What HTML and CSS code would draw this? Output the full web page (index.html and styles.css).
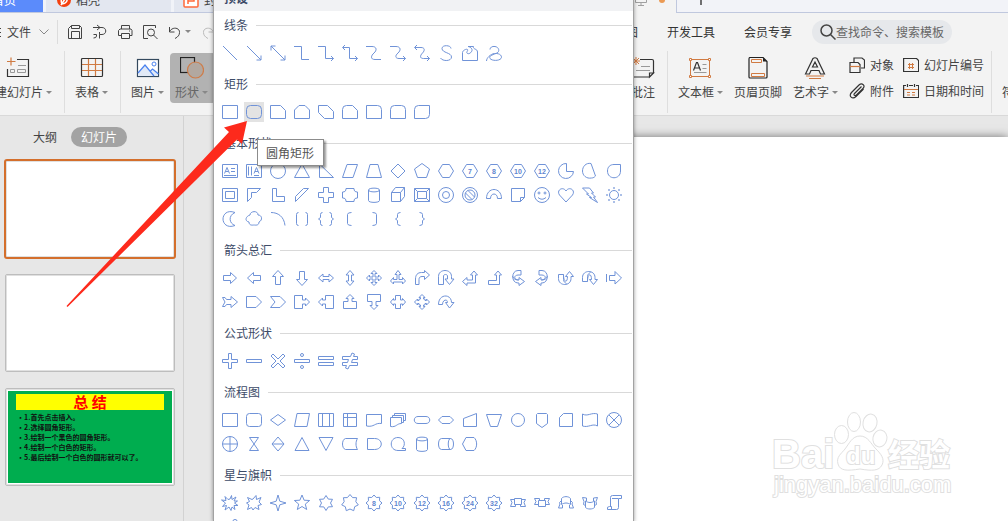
FILE: index.html
```
<!DOCTYPE html>
<html lang="zh-CN">
<head>
    <meta charset="UTF-8">
    <meta name="viewport" content="width=device-width, initial-scale=1.0">
    <title>WPS 演示</title>
    <link rel="stylesheet" href="styles.css">
</head>
<body>
    <div class="app">
        <div class="tab-strip">
            <button class="tab tab-home">首页</button>
            <button class="tab tab-docer">
                <svg width="14" height="18" viewBox="0 0 14 18"><circle cx="7" cy="10" r="7" fill="#f4400f"/><path d="M5 14c-2-4 0-7 5-8 1 5-1 8-5 8zM4 15l4-6" fill="none" stroke="#fff" stroke-width="1.5"/></svg>
                稻壳
            </button>
            <button class="tab tab-file">
                <svg width="16" height="18" viewBox="0 0 16 18"><rect x="1" y="2" width="14" height="15" rx="1" fill="#fff" stroke="#ff6a3a" stroke-width="1.5"/><path d="M5 14V6h6v5H5" fill="none" stroke="#ff6a3a" stroke-width="1.5"/></svg>
                封
            </button>
            <div class="tab tab-active">
                <svg width="12" height="12" viewBox="0 0 12 12" fill="none" stroke="#a0a0a0"><path d="M.5 1v7.500h11V1M6 8.500v3M3 11.500h6"/></svg>
                <span class="unsaved"></span>
            </div>
            <button class="new-tab" aria-label="新建标签">
                <svg width="12" height="12" viewBox="0 0 12 12"><path d="M6 0v12M0 6h12" stroke="#444" stroke-width="1.5"/></svg>
            </button>
        </div>

        <div class="menubar">
            <div class="quick">
                <button class="file-menu">
                    <svg width="10" height="12" viewBox="0 0 10 12" stroke="#444"><path d="M0 2.500h10M0 6.500h10M0 10.500h10"/></svg>
                    文件
                    <svg class="chevron" width="10" height="6" viewBox="0 0 10 6" fill="none" stroke="#888"><path d="M.5.5L5 5 9.500.5"/></svg>
                </button>
                <span class="quick-line"></span>
                <button class="quick-btn" aria-label="保存">
                    <svg width="16" height="16" viewBox="0 0 16 16"><path d="M1.500 14.500v-10l3-3h8l2 2v11zM4.500 1.500v3h8v-3M4.500 14.500v-7h8v7"/></svg>
                </button>
                <button class="quick-btn" aria-label="输出">
                    <svg width="16" height="16" viewBox="0 0 16 16"><path d="M1 3.500h9c5 0 5 7 0 7H7.500v4M5 1l3 2.500L5 6M7.500 10.500V8M1.500 10.500h3v1.500q0 2-3 2"/></svg>
                </button>
                <button class="quick-btn" aria-label="打印">
                    <svg width="16" height="16" viewBox="0 0 16 16"><path d="M4.500 5V1.500h8V5M4 11.500H1.500v-5l1.500-1.500h11l1 1.500v5h-2.500M4.500 9.500h8v5h-8zM12 7h1"/></svg>
                </button>
                <button class="quick-btn" aria-label="打印预览">
                    <svg width="16" height="16" viewBox="0 0 16 16"><path d="M6 14.500H1.500v-13h12V4M5.500 8.500a3.500 3.500 0 1 0 7 0a3.500 3.500 0 1 0-7 0M11.500 11l4 4"/></svg>
                </button>
                <button class="quick-btn undo" aria-label="撤销">
                    <svg width="16" height="16" viewBox="0 0 16 16"><path d="M2.500 3v5h5M2.500 7.500C6 2 13 4 12.500 8.500 12.500 11 11 13 8 14.500"/></svg>
                    <span class="caret"></span>
                </button>
                <button class="quick-btn redo" aria-label="恢复">
                    <svg width="16" height="16" viewBox="0 0 16 16"><path d="M13.500 3v5h-5M13.500 7.500C10 2 3 4 3.500 8.500c0 2.500 1.500 4.500 4.500 6"/></svg>
                </button>
            </div>
            <nav class="menus">
                <a href="#">视图</a>
                <a href="#">开发工具</a>
                <a href="#">会员专享</a>
            </nav>
            <label class="search">
                <svg width="16" height="16" viewBox="0 0 16 16" fill="none" stroke="#444" stroke-width="1.500"><circle cx="6.500" cy="6.500" r="5.500"/><path d="M10.500 10.500l5 5"/></svg>
                <input type="text" placeholder="查找命令、搜索模板" aria-label="查找命令、搜索模板">
            </label>
        </div>

        <div class="ribbon">
            <div class="ribbon-group ribbon-left">
                <button class="tool">
                    <svg width="24" height="22" viewBox="0 0 24 22" fill="none"><path d="M11 2.500h11.500v17h-21V12" stroke="#333" stroke-width="1.200"/><path d="M5 .5v8M1 4.500h8.500" stroke="#d07a42" stroke-width="1.200"/><path d="M12 8.500h8M4.500 12.500h4v3h-4zM11.500 12.500h8v3h-8z" stroke="#999"/></svg>
                    <span class="tool-name">新建幻灯片<i class="caret"></i></span>
                </button>
                <span class="line"></span>
                <button class="tool">
                    <svg width="24" height="22" viewBox="0 0 24 22" fill="none"><path d="M1.500 7.500h21M1.500 13.500h21M8.500 1.500v18M15.500 1.500v18" stroke="#d07a42" stroke-width="1.200"/><rect x="1.500" y="1.500" width="21" height="18" rx="1" stroke="#333" stroke-width="1.200"/></svg>
                    <span class="tool-name">表格<i class="caret"></i></span>
                </button>
                <span class="line"></span>
                <button class="tool">
                    <svg width="24" height="22" viewBox="0 0 24 22" fill="none"><rect x="1.500" y="2.500" width="21" height="17" fill="#fff" stroke="#34495e" stroke-width="1.200"/><path d="M2 16l7-7 6 6 3-3 4 4v3H2z" fill="#e1e9f6"/><path d="M2 16l7-8 9 11M14 14.500l2.500-2.500 6 5" stroke="#4a82ee" stroke-width="1.200"/><circle cx="18" cy="7" r="2" stroke="#4a82ee"/></svg>
                    <span class="tool-name">图片<i class="caret"></i></span>
                </button>
                <button class="tool tool-open">
                    <svg width="24" height="22" viewBox="0 0 24 22" fill="none"><rect x=".5" y=".5" width="14" height="15" stroke="#222" stroke-width="1.200"/><circle cx="15.500" cy="13" r="8" fill="#b2a8a0" stroke="#cf7c48" stroke-width="1.200"/></svg>
                    <span class="tool-name">形状<i class="caret"></i></span>
                </button>
            </div>

            <div class="ribbon-group">
                <button class="tool">
                    <svg width="24" height="22" viewBox="0 0 24 22" fill="none"><path d="M9 2.500h12q1.500 0 1.500 1.500v12l-4 4h-17V9M18.500 20v-4h4z" stroke="#333" stroke-width="1.200"/><path d="M10 9.500h9M5 13.500h14" stroke="#999"/><path d="M5 0v8M1 4h8M2 1l6 6M8 1L2 7" stroke="#d07a42"/></svg>
                    <span class="tool-name">批注</span>
                </button>
                <span class="line"></span>
                <button class="tool">
                    <svg width="24" height="22" viewBox="0 0 24 22" fill="none"><path d="M3 2.500h18M3 19.500h18M2.500 3v16M21.500 3v16" stroke="#d07a42"/><path d="M1.500 1.500h2v2h-2zM20.500 1.500h2v2h-2zM1.500 18.500h2v2h-2zM20.500 18.500h2v2h-2z" fill="#fff" stroke="#d07a42"/><path d="M5.500 13.500l3-8h1l3 8M6.500 11h5" stroke="#333" stroke-width="1.200"/><path d="M14.500 7.500h4M14.500 11.500h4M6 15.500h12.500" stroke="#999"/></svg>
                    <span class="tool-name">文本框<i class="caret"></i></span>
                </button>
                <button class="tool">
                    <svg width="24" height="22" viewBox="0 0 24 22" fill="none"><path d="M4 .5h13l4 4V20q0 1-1 1H4q-1 0-1-1V2q0-1.500 1-1.500z" stroke="#222" stroke-width="1.200"/><path d="M17 .5v4h4z" fill="#222"/><path d="M5.500 2.500h10v3h-10zM5.500 16.500h13v3h-13z" stroke="#d07a42"/></svg>
                    <span class="tool-name">页眉页脚</span>
                </button>
                <button class="tool">
                    <svg width="24" height="22" viewBox="0 0 24 22" fill="none"><path d="M2.500 17L10 1.500Q12 0 14 1.500L21.500 17h-4L16 13.500H8L6.500 17zM9.500 10h5L12 5z" stroke="#333" stroke-width="1.200"/><path d="M3 19h18M6 21.500h12" stroke="#d07a42" stroke-width="1.200"/></svg>
                    <span class="tool-name">艺术字<i class="caret"></i></span>
                </button>
                <div class="small-tools">
                    <button class="small-tool">
                        <svg width="16" height="16" viewBox="0 0 16 16" fill="none" stroke="#333" stroke-width="1.200"><path d="M5 5V1h8l2.500 2v8H12"/><path d="M1 5.500h8l2 2V15.500H1z"/><path d="M1 9.500h10" stroke="#d07a42"/></svg>
                        对象
                    </button>
                    <button class="small-tool">
                        <svg width="16" height="16" viewBox="0 0 16 16" fill="none" stroke="#333" stroke-width="1.200"><path d="M12.500 3.500l-7 7c-1.500 1.500.5 3 2 1.500l6.500-6.500c3-3-1-6-4-3.500l-7.500 7.500c-3.500 4 1 7 4.500 4l7.500-7.500"/></svg>
                        附件
                    </button>
                    <button class="small-tool">
                        <svg width="16" height="16" viewBox="0 0 16 16" fill="none" stroke="#333" stroke-width="1.200"><path d="M.6 1.500h13l2 2v11h-15z"/><path d="M6.500 6v6M9.500 6v6M5 7.500h6M5 10.500h6" stroke="#d07a42" stroke-width="1"/></svg>
                        幻灯片编号
                    </button>
                    <button class="small-tool">
                        <svg width="16" height="16" viewBox="0 0 16 16" fill="none" stroke="#333" stroke-width="1.200"><path d="M3 2.500H.6v12h15v-12H13M6 2.500h4M4.500 1v3M11.500 1v3"/><path d="M1 6.500h14M4 9.500h3M9 9.500h3M4 12h3M9 12h3" stroke="#d07a42" stroke-width="1"/></svg>
                        日期和时间
                    </button>
                </div>
                <span class="line"></span>
                <button class="tool tool-cut"><span class="tool-name">符号</span></button>
            </div>
        </div>

        <div class="workspace">
            <aside class="sidebar">
                <div class="view-switch">
                    <button class="view">大纲</button>
                    <button class="view view-on">幻灯片</button>
                </div>
                <div class="thumbs">
                    <div class="thumb thumb-selected"></div>
                    <div class="thumb"></div>
                    <div class="thumb">
                        <div class="summary">
                            <h3>总 结</h3>
                            <ul>
                                <li>1.首先点击插入。</li>
                                <li>2.选择圆角矩形。</li>
                                <li>3.绘制一个黑色的圆角矩形。</li>
                                <li>4.绘制一个白色的矩形。</li>
                                <li>5.最后绘制一个白色的圆形就可以了。</li>
                            </ul>
                        </div>
                    </div>
                </div>
            </aside>
            <main class="canvas">
                <div class="slide"></div>
            </main>
        </div>

        <div class="shape-menu">
            <div class="menu-head">预设</div>
            <div id="shape-groups"></div>
        </div>

        <div class="tooltip" role="tooltip">圆角矩形</div>

        <svg class="pointer" width="182" height="188" viewBox="0 0 182 188">
            <path d="M.5 187L163 13l-5-4.500L181 2l-5 23-5-4.500L1.500 188z" fill="#fd2a1c"/>
        </svg>

        <svg class="watermark" width="186" height="92" viewBox="0 0 186 92">
            <text x="2" y="60" class="wm-bold" font-size="40">Bai</text>
            <g class="wm-paw">
                <ellipse cx="71.500" cy="26.500" rx="7" ry="9"/>
                <ellipse cx="84" cy="14" rx="6.500" ry="9.500"/>
                <ellipse cx="100" cy="15" rx="7" ry="9" transform="rotate(12 100 15)"/>
                <ellipse cx="110" cy="30.500" rx="7" ry="8.500" transform="rotate(12 110 30)"/>
                <path d="M90 28c8 0 11 8 16 13s9 10 6 16-10 6-22 4c-13 2-20 2-22-5s3-10 7-15 7-13 15-13z"/>
            </g>
            <text x="76" y="56" class="wm-bold" font-size="24">du</text>
            <text x="118" y="58" class="wm-bold wm-cjk" font-size="31">经验</text>
            <text x="4" y="84" class="wm-thin" font-size="22">jingyan.baidu.com</text>
        </svg>
    </div>
    <script src="shapes.js"></script>
</body>
</html>
```

FILE: styles.css
```
* {
    box-sizing: border-box;
}
body, html {
    height: 100%;
    margin: 0;
    padding: 0;
    overflow: hidden;
}
body, button, input {
    font-family: 'Noto Sans CJK SC', sans-serif;
    font-size: 12px;
    line-height: 16px;
    color: #444;
}
button {
    border: none;
    background: none;
    padding: 0;
    white-space: nowrap;
    cursor: pointer;
}
.app {
    position: relative;
    display: flex;
    flex-direction: column;
    height: 100vh;
    overflow: hidden;
    background: #e7e7e7;
}

/* tabs */
.tab-strip {
    display: flex;
    gap: 3px;
    height: 13px;
    padding-bottom: 1px;
    background: #f1f3f8;
    box-shadow: inset 0 -1px #c0c8de;
    flex-shrink: 0;
}
.tab {
    display: flex;
    align-items: flex-end;
    gap: 5px;
    padding: 0 11px 4px;
    background: #e3e7f0;
    overflow: hidden;
}
.tab-home {
    width: 43px;
    padding-left: 0;
    padding-right: 35px;
    justify-content: center;
    background: #5b8bfb;
    color: #fff;
}
.tab-docer {
    width: 125px;
}
.tab-file {
    width: 120px;
    padding-left: 9px;
}
.tab-active {
    flex: 1;
    height: 13px;
    justify-content: flex-end;
    gap: 12px;
    padding-bottom: 7px;
    background: #f3f3f3;
}
.unsaved {
    width: 6px;
    height: 6px;
    margin-bottom: 3px;
    border-radius: 50%;
    background: #eb9a53;
}
.new-tab {
    width: 332px;
    margin-left: -3px;
    padding-left: 18px;
    display: flex;
    align-items: flex-end;
    padding-bottom: 7px;
    background: #f2f3f8;
    border-left: 1px solid #c0c8de;
}

/* menu bar */
.menubar {
    display: flex;
    align-items: center;
    height: 37px;
    flex-shrink: 0;
    padding-right: 56px;
    background: #f3f3f3;
}
.quick {
    display: flex;
    align-items: center;
    margin-right: auto;
    margin-left: -9px;
}
.file-menu {
    display: flex;
    align-items: center;
    gap: 6px;
}
.chevron {
    margin-left: 2px;
}
.quick-line {
    width: 1px;
    height: 24px;
    margin: 0 9px 0 8px;
    background: #dcdcdc;
}
.quick-btn {
    display: flex;
    align-items: center;
    gap: 2px;
    margin-right: 9px;
}
.quick-btn svg {
    fill: none;
    stroke: #444;
}
.redo svg {
    stroke: #bbb;
}
.caret {
    display: inline-block;
    border: 3px solid transparent;
    border-top-color: #888;
    border-bottom: 0;
}
.menus {
    display: flex;
    gap: 29px;
    margin-right: 20px;
}
.menus a {
    color: #333;
    text-decoration: none;
}
.search {
    display: flex;
    align-items: center;
    width: 140px;
    height: 24px;
    padding: 0 4px 0 8px;
    border-radius: 12px;
    background: #e6e8eb;
}
.search svg {
    flex-shrink: 0;
}
.search input {
    flex: 1;
    min-width: 0;
    padding: 0;
    border: none;
    outline: none;
    background: none;
}
.search input::placeholder {
    color: #666;
}

/* ribbon */
.ribbon {
    display: flex;
    justify-content: space-between;
    height: 66px;
    padding-top: 1px;
    flex-shrink: 0;
    background: #f3f3f3;
    border-bottom: 1px solid #d9d9d9;
}
.ribbon-group {
    display: flex;
    align-items: flex-start;
}
.ribbon-left {
    margin-left: -22px;
}
.tool {
    display: flex;
    flex-direction: column;
    align-items: center;
    gap: 4px;
    height: 50px;
    margin-top: 2px;
    padding: 4px 5px 2px;
    border-radius: 4px;
}
.tool + .tool {
    margin-left: 1px;
}
.tool-name {
    display: flex;
    align-items: center;
    gap: 3px;
    line-height: 18px;
}
.tool-open {
    padding-right: 8px;
    background: #b2b2b2;
}
.tool-open .tool-name {
    color: #666;
}
.tool-cut {
    width: 11px;
    align-items: flex-start;
    justify-content: flex-end;
    overflow: hidden;
    border-radius: 0;
}
.line {
    width: 1px;
    height: 62px;
    margin: 0 5px 0 7px;
    background: #dedede;
}
.small-tools {
    display: grid;
    grid-template-rows: 26px 26px;
    grid-auto-flow: column;
    column-gap: 9px;
    margin: 1px 0 0 6px;
}
.small-tool {
    display: flex;
    align-items: center;
    gap: 5px;
}

/* workspace */
.workspace {
    display: flex;
    flex: 1;
    min-height: 0;
}
.sidebar {
    width: 184px;
    flex-shrink: 0;
    border-right: 1px solid #d2d2d2;
}
.view-switch {
    display: flex;
    align-items: center;
    gap: 14px;
    padding: 11px 0 13px 33px;
}
.view-on {
    height: 20px;
    padding: 0 10px;
    border-radius: 10px;
    background: #a3a3a3;
    color: #fff;
}
.thumbs {
    display: flex;
    flex-direction: column;
    gap: 16px;
    padding-left: 5px;
}
.thumb {
    width: 170px;
    height: 98px;
    border: 1px solid #bdbdbd;
    border-radius: 2px;
    padding: 2px;
    background: #fff;
    box-shadow: inset 0 0 0 1px #e0e0e0;
}
.thumb-selected {
    border-color: #cccccc;
    outline: 2px solid #d46f2c;
    outline-offset: -1px;
}
.summary {
    height: 92px;
    padding: 3px 8px;
    background: #00ad4f;
    color: #111;
}
.summary h3 {
    margin: 0 0 2px;
    background: #ff0;
    color: #f00;
    font-size: 15px;
    line-height: 16px;
    text-align: center;
}
.summary ul {
    margin: 0;
    padding-left: 6px;
    font-size: 7px;
    font-weight: bold;
    line-height: 10px;
    white-space: nowrap;
    list-style: none;
}
.summary li::before {
    content: '•';
    float: left;
    margin-left: -5px;
}
.canvas {
    flex: 1;
    padding: 21px 0 0 50px;
}
.slide {
    height: 100%;
    background: #fff;
    box-shadow: 0 0 9px rgba(0,0,0,0.5);
}

/* shapes drop-down */
.shape-menu {
    position: absolute;
    top: 0;
    bottom: 0;
    left: 214px;
    width: 419px;
    overflow: hidden;
    background: #fff;
    outline: 1px solid #a2a2a2;
    box-shadow: 0 0 4px 1px rgba(0,0,0,0.4);
}
.menu-head {
    display: flex;
    align-items: flex-end;
    height: 11px;
    padding: 0 10px 5px;
    background: #f1f2f4;
    color: #3d4b68;
    font-weight: bold;
}
.group {
    margin-bottom: 5px;
}
.group-name {
    display: flex;
    align-items: center;
    gap: 8px;
    margin: 0;
    padding: 6px 1px 8px 10px;
    font-size: 12px;
    font-weight: normal;
    line-height: 16px;
    color: #3d4b68;
}
.group-name::after {
    content: '';
    flex: 1;
    height: 1px;
    background: #d9d9d9;
}
.shapes {
    display: flex;
    flex-wrap: wrap;
    padding-left: 4px;
}
.shape {
    width: 24px;
    height: 24px;
    padding: 2px;
    background-clip: content-box;
}
.shape:hover, .shape-hover {
    background-color: #e3e3e3;
}
.shape svg {
    display: block;
    margin: -2px;
    fill: none;
    stroke: #7093d8;
}
.shape text {
    font: bold 7px 'Liberation Sans', sans-serif;
    text-anchor: middle;
    fill: #6085cf;
    stroke: none;
}
.tooltip {
    position: absolute;
    top: 139px;
    left: 257px;
    padding: 5px 9px 4px 8px;
    border: 1px solid #8c8c8c;
    background: #fff;
    color: #555;
    box-shadow: 2px 2px 2px rgba(0,0,0,0.4);
}
.pointer {
    position: absolute;
    top: 119px;
    left: 66px;
    pointer-events: none;
}

/* watermark */
.watermark {
    position: absolute;
    right: 52px;
    bottom: 21px;
    fill: #fff;
    stroke: #e0e0e0;
    pointer-events: none;
}
.wm-bold, .wm-thin {
    font-family: 'Liberation Sans', sans-serif;
    stroke-width: 2px;
    paint-order: stroke;
}
.wm-bold {
    font-weight: bold;
}
.wm-cjk {
    font-family: 'Noto Sans CJK SC', sans-serif;
}
.wm-paw {
    stroke-width: 1px;
}
```

FILE: shapes.js
```
// every outline is drawn in a 24 x 24 cell
function circle(x, y, r) {
    return `M${x - r} ${y}a${r} ${r} 0 1 0 ${2 * r} 0a${r} ${r} 0 1 0 ${-2 * r} 0z`;
}

function star(points, outer, inner) {
    let d = '';
    for (let i = 0; i < points * 2; i++) {
        const r = i % 2 ? inner : outer;
        const a = Math.PI * i / points - Math.PI / 2;
        d += (i ? 'L' : 'M') + (12 + r * Math.cos(a)).toFixed(1) + ' ' + (12 + r * Math.sin(a)).toFixed(1);
    }
    return d + 'z';
}

const hexagon = 'M8.5 5.500h7l4 6.500-4 6.500h-7L4.500 12z';
const seal = star(8, 8, 6);
const rect = 'M4.500 5.500h15v13h-15z';
const roundRect = 'M8.500 5.500h7q4 0 4 4v5q0 4-4 4h-7q-4 0-4-4v-5q0-4 4-4z';
const can = 'M6.500 7v10.500c0 2.500 11 2.500 11 0V7c0-2.500-11-2.500-11 0s11 2.500 11 0';

// a shape is a path, or [path, label] when it carries a number
const groups = [
    ['线条', [
        'M5 5l14 14',
        'M5 5l14 14M19 14.500V19h-4.500',
        'M5 5l14 14M19 14.500V19h-4.500M5 9.500V5h4.500',
        'M4 5.500h7.500v13H19',
        'M4 5.500h7.500v12h8M17 15l2.500 2.500L17 20',
        'M5 6.500h6.500v11h8M17 15l2.500 2.500L17 20M7 4L4.500 6.500 7 9',
        'M4 5.500h6c5 0 5 4 2 6.500s-4 6.500 1 6.500h6',
        'M4 5.500h6c5 0 5 4 2 6.500s-3 5.500 1 5.500h6.500M17 15l2.500 2.500L17 20',
        'M5 6.500h6c4 0 4 3 1.500 5.500s-3 5.500 1 5.500h6M17 15l2.500 2.500L17 20M7 4L4.500 6.500 7 9',
        'M17 7.500C17 4 8 3.500 8 7.500c0 4.500 9.500 4 9.500 8.500 0 4.500-9 4.500-11 1',
        'M4.500 19.500v-8c0-2 4-4 5-3s-2 3 0 4 5-2 4.500-4-3-3-4-3h5.500c-1 3 4 2 4 5.500v8.500z',
        'M4.500 20c0-3 4-7 8-7.500 6-.5 8 3 6.500 5-2 2.500-9 2.500-11 0-1.500-3 4-4 7-5.500s2-6-2-6.500c-3-.5-5 1-5 3'
    ]],
    ['矩形', [
        rect,
        roundRect,
        'M4.500 5.500h10l5 5v8h-15z',
        'M9 5.500h6l4.500 4.500v8.500h-15V10z',
        'M4.500 5.500h9l6 6v7h-9l-6-6z',
        'M8.500 5.500h6l5 5v8h-15v-9q0-4 4-4z',
        'M4.500 5.500h11q4 0 4 4v9h-15z',
        'M8.500 5.500h7q4 0 4 4v9h-15v-9q0-4 4-4z',
        'M8.500 5.500h11v9q0 4-4 4h-11v-9q0-4 4-4z'
    ]],
    ['基本形状', [
        rect + 'M6.500 14.500l2.500-6 2.500 6M7.500 12.500h3M13 9.500h4M13 12.500h4M6 16.500h12',
        rect + 'M6.500 7.500v9M9.500 7.500v9M12 14.500l2.500-6 2.500 6M13 12.500h3M12 16.500h5',
        circle(12, 12, 7.5),
        'M12 5l7.500 13.500h-15z',
        'M5.500 5v13.500h14z',
        'M9 5.500h10.500l-4.500 13H4.500z',
        'M8 5.500h8l3.500 13h-15z',
        'M12 5l7 7-7 7-7-7z',
        'M12 4.500l7.500 5.500-3 8.500h-9L4.500 10z',
        hexagon,
        [hexagon, '7'],
        [hexagon, '8'],
        [hexagon, '10'],
        [hexagon, '12'],
        'M12.500 4.500a7.500 7.500 0 1 0 7 8h-7z',
        'M13 4.500c-5-1-8.500 3-8.500 7.500s4 8 9 7c2 0 3-1 4-2z',
        'M12 5.500h6.500V12c0 9-13 9-13 0 0-4 2.500-6.500 6.500-6.500z',
        rect + 'M7.500 8.500h9v7h-9z',
        'M5.500 5.500h13l-4 4h-5v5l-4 4z',
        'M6.500 5.500h4v8h8v5h-12z',
        'M5.500 18.500v-5l8-8h5z',
        'M9.500 4.500h5v5h5v5h-5v5h-5v-5h-5v-5h5z',
        'M8 5.500h8c0 2.500 1 3.500 3.500 3.500v6c-2.500 0-3.500 1-3.500 3.500H8c0-2.500-1-3.500-3.500-3.500V9C7 9 8 8 8 5.500z',
        can,
        'M5.500 9.500h9v9h-9zM5.500 9.500l4-5h9v9l-4 5M14.500 9.500l4-5',
        rect + 'M7.500 8.500h9v7h-9zM4.500 5.500l3 3M19.500 5.500l-3 3M4.500 18.500l3-3M19.500 18.500l-3-3',
        circle(12, 12, 7.5) + circle(12, 12, 3.5),
        circle(12, 12, 7.5) + circle(12, 12, 5) + 'M7.500 10l6.500 6.500M10 7.500l6.500 6.500',
        'M4.500 15.500c0-12 15-12 15 0h-4c0-6-7-6-7 0z',
        'M5.500 5.500h13v9l-4 4h-9zM14.500 18.500v-4h4',
        circle(12, 12, 7.5) + circle(9, 10, 1) + circle(15, 10, 1) + 'M8 14.500q4 3.500 8 0',
        'M12 19L5.500 12C2 7 9 3 12 8c3-5 10-1 6.500 4z',
        'M4.500 5h7l4 5h-2l4 4h-2l4 5.500-8-5h2l-5-3.500h2z',
        circle(12, 12, 4.5) + circle(12, 5, .5) + circle(12, 19, .5) + circle(5, 12, .5) + circle(19, 12, .5)
            + circle(7, 7, .5) + circle(17, 7, .5) + circle(7, 17, .5) + circle(17, 17, .5),
        'M17 5.500c-8-3-12 2-12 6.500s4 9.500 12 6.500c-6-2-7-10 0-13z',
        'M8 8c0-4 8-5 8 0 4 0 5 5 1 7 0 4-4 3-5 3s-5 1-5-3c-5-1-3-6 1-7z',
        'M5 5.500c7 0 13 4 14 13',
        'M8.500 5.500q-2 0-2 2v9q0 2 2 2M15.500 5.500q2 0 2 2v9q0 2-2 2',
        'M8.500 5.500q-2 0-2 2v3l-2 1.500 2 1.500v3q0 2 2 2M15.500 5.500q2 0 2 2v3l2 1.500-2 1.500v3q0 2-2 2',
        'M13.500 5.500q-4 0-4 2v9q0 2 4 2',
        'M10.500 5.500q4 0 4 2v9q0 2-4 2',
        'M14.500 5.500q-3 0-3 2v3L9.500 12l2 1.500v3q0 2 3 2',
        'M9.500 5.500q3 0 3 2v3l2 1.500-2 1.500v3q0 2-3 2'
    ]],
    ['箭头总汇', [
        'M5.500 9.500h7v-3l6 5.500-6 5.500v-3h-7z',
        'M18.500 9.500h-7v-3L5.500 12l6 5.500v-3h7z',
        'M9.500 18.500v-8h-3L12 4.500l5.500 6h-3v8z',
        'M9.500 5.500v8h-3L12 19.500l5.500-6h-3v-8z',
        'M4.500 12L9 8v2.500h6V8l4.500 4-4.500 4v-2.500H9V16z',
        'M12 4.500L16 9h-2.500v6H16l-4 4.500L8 15h2.500V9H8z',
        'M12 4.500l3 3h-2v3.500h3.500V9l3 3-3 3v-2H13v3.500h2l-3 3-3-3h2V13H7.500v2l-3-3 3-3v2H11V7.500H9z',
        'M12 4.500l3 4h-2v5h3.500v-2l3 3.500-3 3v-2h-9v2l-3-3 3-3.500v2H11v-5H9z',
        'M5.500 18.500V13c0-4 2-6.500 6-6.500h3v-2l5 4.500-5 4.500v-3h-2.500c-2 0-3 1-3 3v5z',
        'M4.500 18.500v-8c0-8 13-8 13 0V13h2.500l-4.500 5.500-4.500-5.500h2.500v-3c0-2-4-2-4 0v8.500z',
        'M16 5l3.500 4h-2v8H9v2.500l-4.500-4L9 11.500V14h5.500V9h-2z',
        'M16 5l3.500 4h-2v9.500h-11v-4h8V9h-2z',
        'M15 4.500h-3C5 4.500 5 17 12 17h1v2.500l5.500-4-5.500-4V14c-5 0-6-4.500-1-5h3zM6.500 10c1 3 3 4 6 4',
        'M9 4.500h3C19 4.500 19 17 12 17h-1v2.500l-5.500-4 5.500-4V14c5 0 6-4.500 1-5H9zM17.500 10c-1 3-3 4-6 4',
        'M4.500 8.500v4c0 8 12.500 8 12.500 0v-2h2.500l-4-5-4 5h2c0 7-4 6-4-2h-5zM9.500 8.500v5c0 2 1 3 3 4',
        'M4.500 15.500v-4c0-8 12.500-8 12.500 0v2h2.500l-4 5-4-5h2c0-7-4-6-4 2h-5zM9.500 15.500v-5c0-2 1-3 3-4',
        'M4.500 8v8M7.500 9.500H13v-4l6.500 6.500-6.500 6v-3.500H7.500z',
        'M4.500 7.500H7l1.500 2H13v-3l6.500 5.500-6.500 5.500v-3H8.500l-1.500 2H4.500L7 12z',
        'M4.500 6.500H14l5.500 5.500-5.500 5.500H4.500z',
        'M4.500 6.500H14l5.500 5.500-5.500 5.500H4.500L9 12z',
        'M4.500 5.500h8V10h3V8l4 4-4 4v-2h-3v4.500h-8z',
        'M19.500 5.500h-8V10h-3V8l-4 4 4 4v-2h3v4.500h8z',
        'M5.500 18.500v-7H10v-3H8l4-4 4 4h-2v3h4.500v7z',
        'M5.500 4.500v7H10v4H8l4 4 4-4h-2v-4h4.500v-7z',
        'M9.500 5.500h5V10h2V8.500l3 3.500-3 3.500V14h-2v4.500h-5V14h-2v1.500l-3-3.500 3-3.500V10h2z',
        'M12 4.500l3 3h-1.500V9H15v1.500h1.500V9l3 3-3 3v-1.500H15V15h-1.500v1.500H15l-3 3-3-3h1.500V15H9v-1.500H7.500V15l-3-3 3-3v1.500H9V9h1.500V7.500H9z',
        'M4.500 14.500c0-11 13-11 13-2H20l-4.500 5.500-4-5.500h2c0-4-5-3-5 2z'
    ]],
    ['公式形状', [
        'M10.500 4.500h3v6h6v3h-6v6h-3v-6h-6v-3h6z',
        'M4.500 10.500h15v3h-15z',
        'M7 5l5 5 5-5 2 2-5 5 5 5-2 2-5-5-5 5-2-2 5-5-5-5z',
        'M4.500 10.500h15v3h-15z' + circle(12, 6, 1.5) + circle(12, 18, 1.5),
        'M4.500 7.500h15v3h-15zM4.500 13.500h15v3h-15z',
        'M4.500 7.500h8L14 4l2.500 1-1 2.500h4v3h-5l-1 3h6v3h-8L10 20l-2.500-1 1-2.500h-4v-3h5l1-3h-6z'
    ]],
    ['流程图', [
        rect,
        'M7.500 5.500h9q3 0 3 3v7q0 3-3 3h-9q-3 0-3-3v-7q0-3 3-3z',
        'M12 6.500l7.500 5.500-7.500 5.500L4.500 12z',
        'M7 5.500h12.500l-2.500 13H4.500z',
        rect + 'M8.500 5.500v13M15.500 5.500v13',
        'M5.500 5.500h13v13h-13zM9.500 5.500v13M5.500 9.500h13',
        'M4.500 6.500h15v9c-7-1-7 4-15 2.500z',
        'M4.500 9.500h11v6c-5 0-5 4-11 3zM6.500 9V7.500h11v7h-2M8.500 7V5.500h11v7h-2',
        'M8 8.500h8c5 0 5 7 0 7H8c-5 0-5-7 0-7z',
        'M8 8.500h8l3.500 3.500-3.500 3.500H8L4.500 12z',
        'M5.500 10.500l13-5v13h-13z',
        'M4.500 6.500h15l-4 12h-7z',
        circle(12, 12, 6.5),
        'M7.500 5.500h9l1 1v9L12 19.500l-5.500-4v-9z',
        'M9.500 5.500h9v13h-13v-9z',
        'M4.500 6c5 3 9-2 15 0v12c-5-3-9 2-15 0z',
        circle(12, 12, 7.5) + 'M7 7l10 10M17 7L7 17',
        circle(12, 12, 7.5) + 'M12 4.500v15M4.500 12h15',
        'M7.500 5.500h9l-9 13h9z',
        'M12 5l6 7-6 7-6-7zM6 12h12',
        'M12 5.500l7 13H5z',
        'M5 5.500h14L12 18.500z',
        'M7.500 6.500h12c-2 3-2 8 0 11h-12c-4-1-4-10 0-11z',
        'M5.500 6.500h7c9 0 9 11 0 11h-7z',
        'M19.500 18.500H12c-9 0-9-13 0-13 7 0 8 8 4 11h3.500z',
        can,
        'M7.500 6.500h9c4 0 4 11 0 11h-9c-4 0-4-11 0-11zM16.500 6.500c-3 0-3 11 0 11',
        'M8 5.500h8c3.500 3 3.500 10 0 13H8L4.500 12z'
    ]],
    ['星与旗帜', [
        'M12 8l1.500-3.500.5 4 4-2.500-2 4 3.500 0-3 2 3.500 2.500-4 0 1 4-3-2.500-1 3.500-2-3.500-4 3 1.500-4.500-4 1 3-3.500-4-3 4.500.5L7 5.500l3 3z',
        'M11 8l3-3.500.5 4 4.500-2-2 4.500 2.500 2.500-3.500 1 1 4-4-2-2 2.500-1.500-2.500-4 2 1.500-4.500-2.500-2 3-1.500-2-4 4.500 2z',
        star(4, 8, 2.5),
        star(5, 8, 3.5),
        star(6, 7.5, 4.5),
        star(7, 8.5, 6),
        [seal, '8'], [seal, '10'], [seal, '12'], [seal, '16'], [seal, '24'], [seal, '32'],
        'M8.500 7.500h7v6h-7zM8.500 8.500h-4l1.500 3-1.500 4h5v-2M15.500 8.500h4l-1.500 3 1.500 4h-5v-2',
        'M8.500 9.500h7v6h-7zM8.500 13.500h-4l1.500-3-1.500-3h5v2M15.500 13.500h4l-1.500-3 1.500-3h-5v2',
        'M7.500 13.500v-6c2-2.500 7-2.500 9 0v6c-3-2-6-2-9 0zM7.500 9.500l-2 2 .5 1.500-1.500 4h4v-3M16.500 9.500l2 2-.5 1.500 1.500 4h-4v-3',
        'M7.500 10c3 2 6 2 9 0v6.500c-2 2-7 2-9 0zM7.500 14.500l-2-1 .5-3-1.500-4 4 .5v3M16.500 14.500l2-1-.5-3 1.500-4-4 .5v3',
        'M8.500 15.500v-9q0-2 2-2h9v3h-3v9q0 2-2 2h-9q-1-3 2-3h2v3M10 7.500h6',
        'M5.500 8.500h12v9h-12zM15 8.500V6q0-1.500 2-1.500t2 1.500v2.500'
    ]]
];

const menu = document.getElementById('shape-groups');
groups.forEach(([name, shapes]) => {
    const buttons = shapes.map(shape => {
        const [path, label] = Array.isArray(shape) ? shape : [shape];
        const hover = name === '矩形' && shape === roundRect ? ' shape-hover' : '';
        const text = label ? `<text x="12" y="14.500">${label}</text>` : '';
        return `<button class="shape${hover}"><svg width="24" height="24" viewBox="0 0 24 24"><path d="${path}"/>${text}</svg></button>`;
    });
    menu.insertAdjacentHTML('beforeend',
        `<section class="group"><h2 class="group-name">${name}</h2><div class="shapes">${buttons.join('')}</div></section>`);
});
```
